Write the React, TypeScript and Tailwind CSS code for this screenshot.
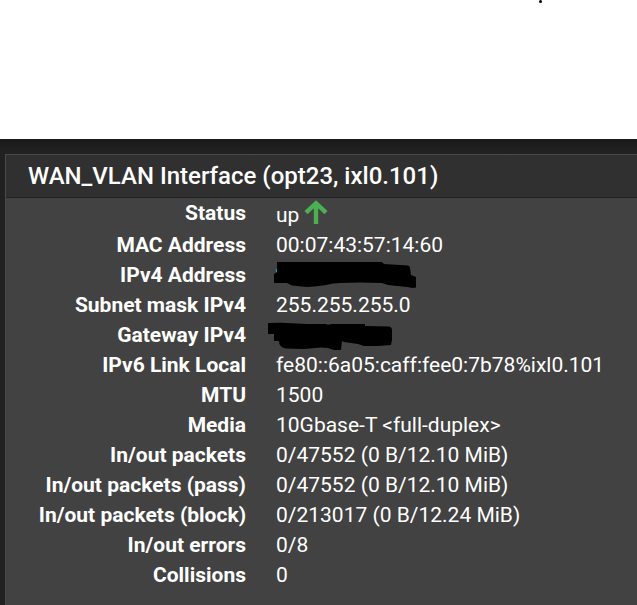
import type { ReactNode } from "react";

const UpArrow = () => (
  <svg viewBox="0 0 24 24" className="size-6" fill="none" role="img" aria-label="up">
    <path d="M2 12.6 12 3.2l10 9.4M12 3.2V24" stroke="#4caf50" strokeWidth="4.4" />
  </svg>
);

// Hand-scribbled marker strokes over the private addresses
const Ipv4Mask = () => (
  <svg viewBox="0 0 150 30" className="-ml-2 block h-[30px] w-[150px]" role="img" aria-label="hidden address">
    <path d="M8 9h3v4H8z" fill="#0f9bd8" />
    <path d="M9 2H114L116 4 140 5.500Q142 6 142 8L143 15 148 17V27.500L145 28 139 27 120 25 114 23 92 22.500 72 23Q65 23 58 25 49 26.500 39 27L24 25.500 19 23H6V14L9 12Z" />
  </svg>
);

const GatewayMask = () => (
  <svg viewBox="0 0 150 30" className="-ml-2 block h-[30px] w-[150px]" role="img" aria-label="hidden gateway">
    <path d="M0 3 13 2.700 39 4 58 4 60 4.700 64 4H97V6L121 6.500Q124 7 124 10V20L123 25 110 26H96L90 24 76 22 74 21 73 30H66L60 28 53 27.500 36 29 18 28.500Q11 28 11 21H6V14H0Z" />
  </svg>
);

const stats: { label: string; value: ReactNode }[] = [
  {
    label: "Status",
    value: (
      <span className="flex items-start gap-[5px] pt-0.5">
        up <UpArrow />
      </span>
    ),
  },
  { label: "MAC Address", value: "00:07:43:57:14:60" },
  { label: "IPv4 Address", value: <Ipv4Mask /> },
  { label: "Subnet mask IPv4", value: "255.255.255.0" },
  { label: "Gateway IPv4", value: <GatewayMask /> },
  { label: "IPv6 Link Local", value: "fe80::6a05:caff:fee0:7b78%ixl0.101" },
  { label: "MTU", value: "1500" },
  { label: "Media", value: "10Gbase-T <full-duplex>" },
  { label: "In/out packets", value: "0/47552 (0 B/12.10 MiB)" },
  { label: "In/out packets (pass)", value: "0/47552 (0 B/12.10 MiB)" },
  { label: "In/out packets (block)", value: "0/213017 (0 B/12.24 MiB)" },
  { label: "In/out errors", value: "0/8" },
  { label: "Collisions", value: "0" },
];

function App() {
  return (
    <div className="flex min-h-screen flex-col overflow-hidden bg-white font-['Roboto',sans-serif] text-white">
      <header className="flex h-[139px] justify-end pr-[95px]">
        <span className="size-[3px] rounded-full bg-black" />
      </header>

      <main className="flex grow flex-col bg-[#212121] bg-linear-to-b from-[#191919] from-0% to-[#212121] to-[12px] pt-[15px] pl-[5px]">
        <section className="grow border-t border-l border-[#4a4a4a] bg-[#424242]">
          <h2 className="border-b border-[#212121] bg-[#303030] py-[5px] pl-[22px] text-[24px] leading-8 font-medium">
            WAN_VLAN Interface (opt23, ixl0.101)
          </h2>
          <dl className="text-[21px] leading-[30px]">
            {stats.map((stat) => (
              <div key={stat.label} className="flex gap-[30px]">
                <dt className="w-[240px] shrink-0 text-right font-bold">{stat.label}</dt>
                <dd className="min-w-0">{stat.value}</dd>
              </div>
            ))}
          </dl>
        </section>
      </main>
    </div>
  );
}

export default App;
